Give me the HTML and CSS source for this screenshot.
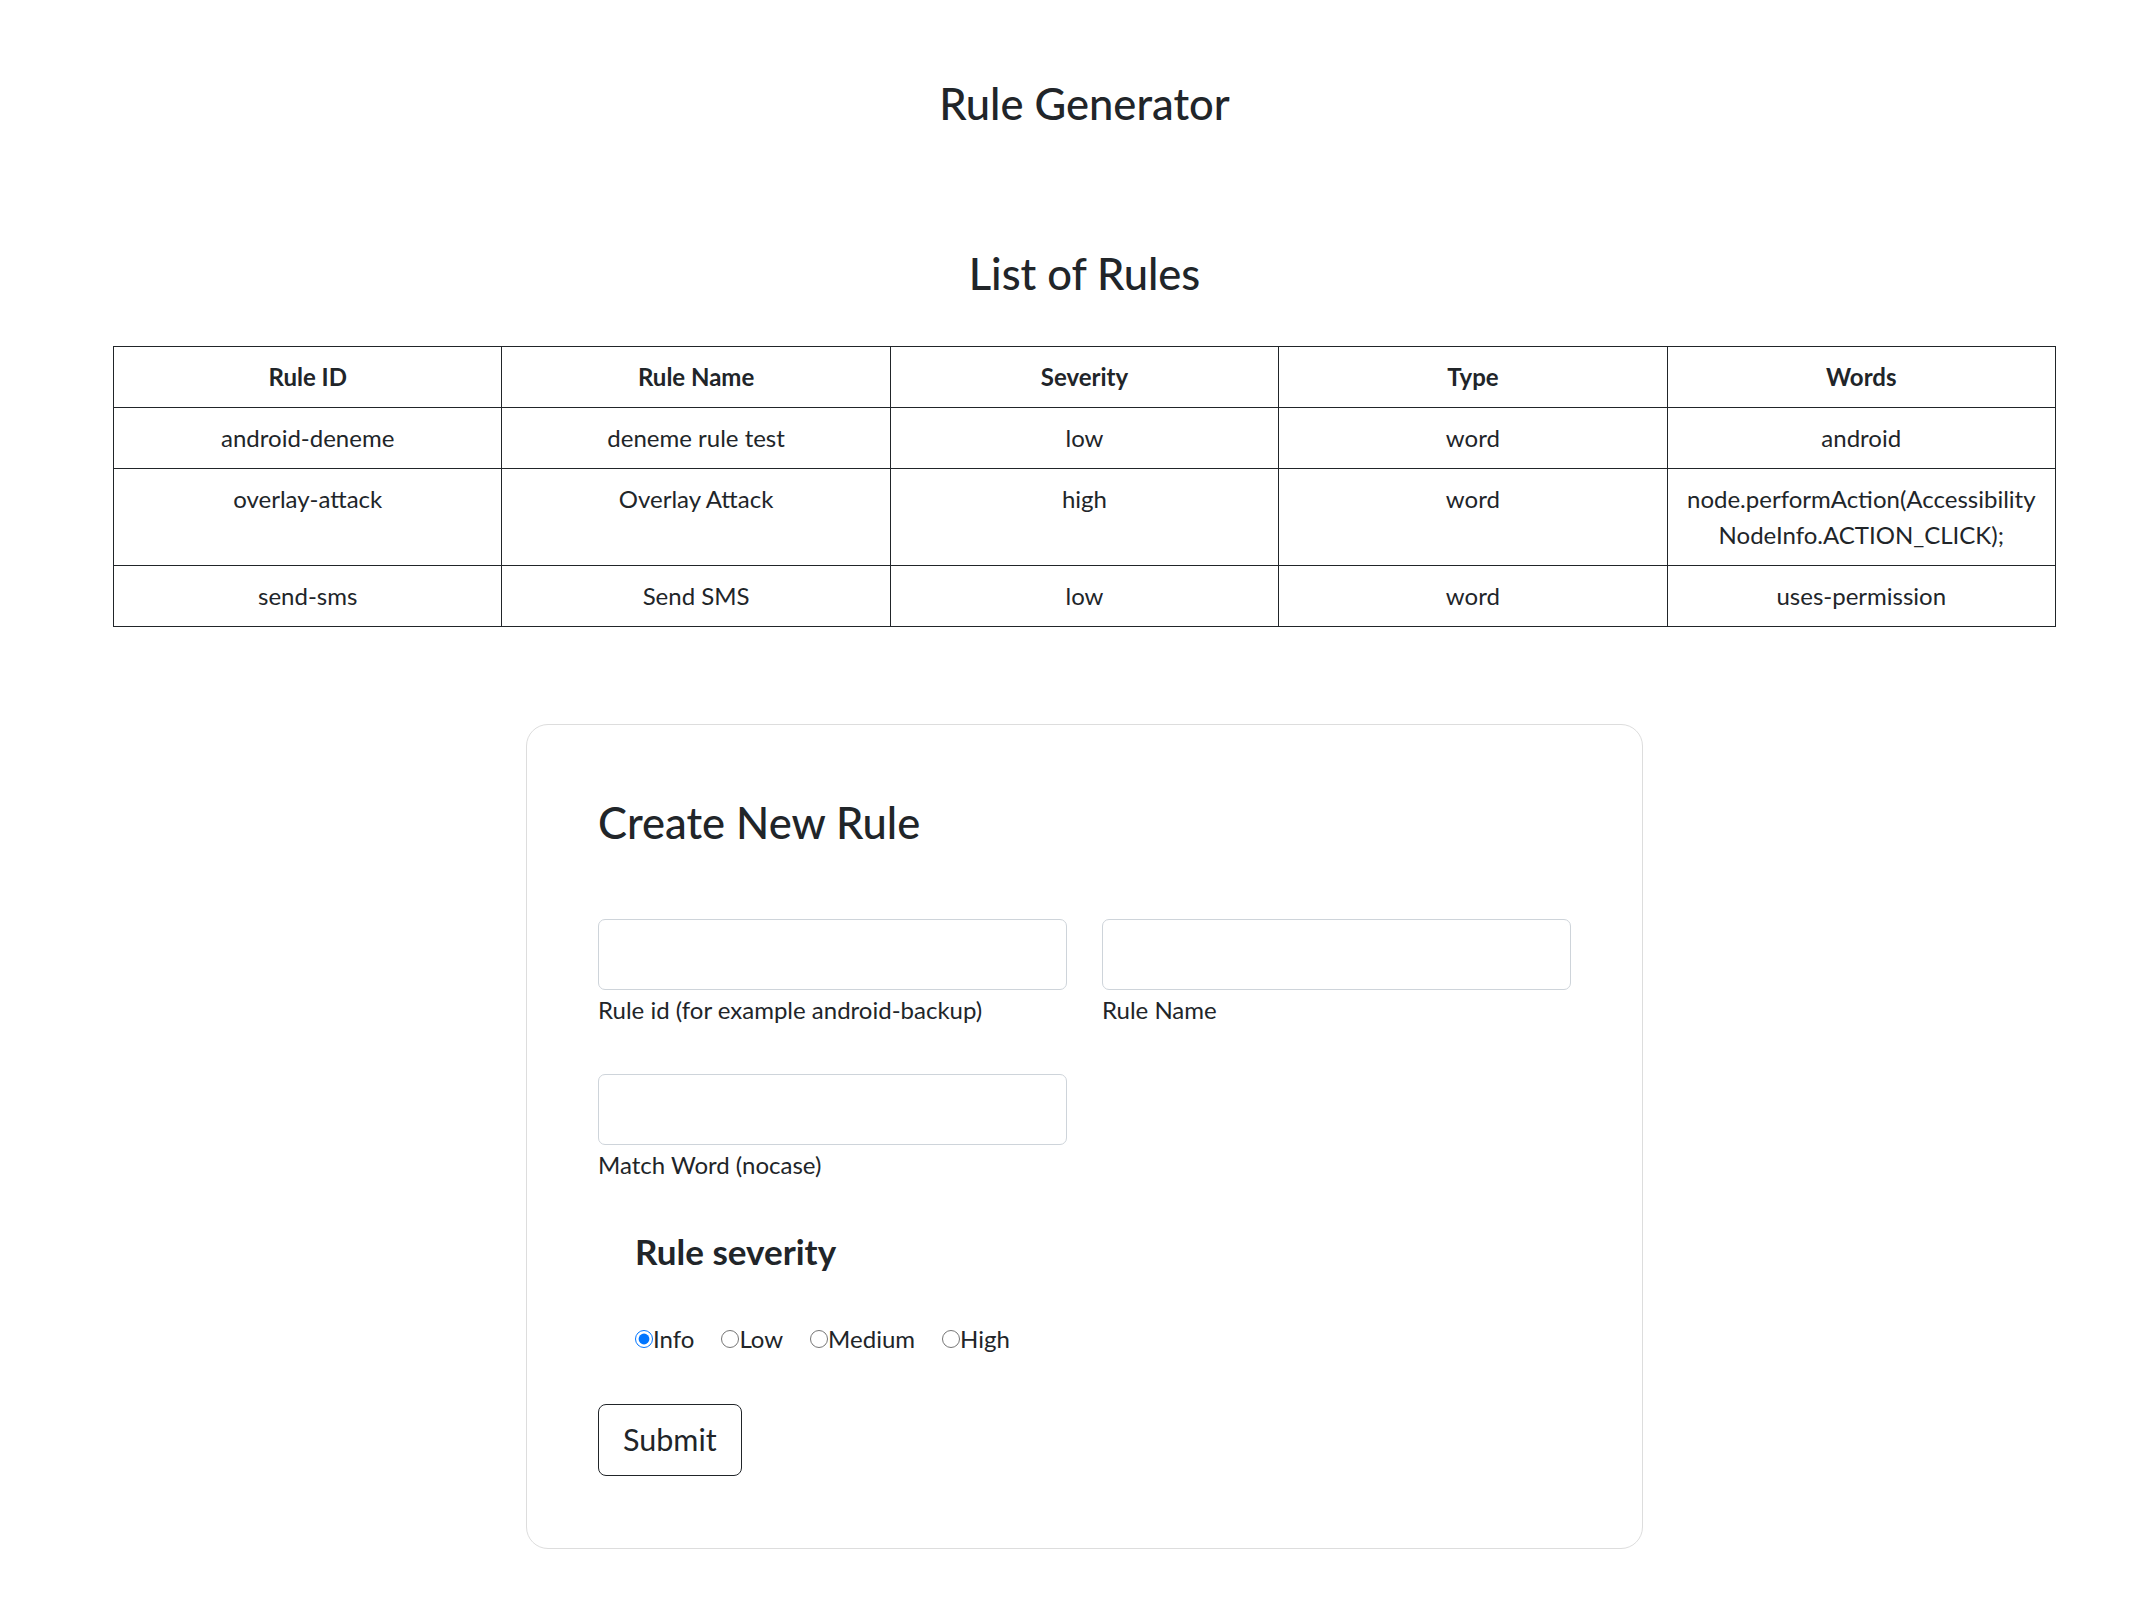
FILE: index.html
```html
<!DOCTYPE html>
<html lang="en">
<head>
<meta charset="utf-8">
<title>Rule Generator</title>
<link rel="stylesheet" href="styles.css">
</head>
<body>
<div class="page">
  <h1 class="page-title">Rule Generator</h1>
  <h2 class="page-title list-title">List of Rules</h2>
  <table class="rules">
    <thead>
      <tr><th>Rule ID</th><th>Rule Name</th><th>Severity</th><th>Type</th><th>Words</th></tr>
    </thead>
    <tbody>
      <tr><td>android-deneme</td><td>deneme rule test</td><td>low</td><td>word</td><td>android</td></tr>
      <tr><td>overlay-attack</td><td>Overlay Attack</td><td>high</td><td>word</td><td>node.performAction(Accessibility<wbr>NodeInfo.ACTION_CLICK);</td></tr>
      <tr><td>send-sms</td><td>Send SMS</td><td>low</td><td>word</td><td>uses-permission</td></tr>
    </tbody>
  </table>

  <form class="card">
    <h2 class="card-title">Create New Rule</h2>
    <div class="fields">
      <div class="field">
        <input class="input" type="text">
        <div class="hint">Rule id (for example android-backup)</div>
      </div>
      <div class="field">
        <input class="input" type="text">
        <div class="hint">Rule Name</div>
      </div>
      <div class="field">
        <input class="input" type="text">
        <div class="hint">Match Word (nocase)</div>
      </div>
    </div>
    <div class="severity">
      <h4 class="severity-title">Rule severity</h4>
      <div class="radios">
        <label class="radio"><input type="radio" name="sev" checked>Info</label>
        <label class="radio"><input type="radio" name="sev">Low</label>
        <label class="radio"><input type="radio" name="sev">Medium</label>
        <label class="radio"><input type="radio" name="sev">High</label>
      </div>
    </div>
    <button type="button" class="submit">Submit</button>
  </form>
</div>
</body>
</html>
```
FILE: styles.css
```css
html, body {
  margin: 0;
  padding: 0;
  background: #ffffff;
}

body {
  font-family: Lato, "Open Sans", "Liberation Sans", sans-serif;
  font-size: 24px;
  line-height: 1.5;
  color: #212529;
}

.page {
  margin-left: 113px;
  width: 1943px;
  padding-bottom: 61px;
}

.page-title {
  margin: 77px 0 0;
  font-size: 43.5px;
  line-height: 1.2;
  font-weight: 500;
  text-align: center;
}

.list-title {
  margin-top: 118px;
}

.rules {
  margin-top: 47px;
  width: 1943px;
  border-collapse: collapse;
  table-layout: fixed;
}

.rules th,
.rules td {
  border: 1px solid #212529;
  padding: 12px 10px;
  line-height: 36px;
  text-align: center;
  vertical-align: top;
  overflow-wrap: anywhere;
}

.rules th {
  font-weight: 700;
}

.card {
  display: block;
  margin: 97px auto 0;
  width: 1117px;
  box-sizing: border-box;
  border: 1px solid #dddddd;
  border-radius: 22px;
  padding: 71px 71px 72px;
}

.card-title {
  margin: 0 0 70px;
  font-size: 43.5px;
  line-height: 1.2;
  font-weight: 500;
}

.fields {
  display: grid;
  grid-template-columns: 469px 469px;
  column-gap: 35px;
  row-gap: 46px;
}

.field {
  display: flex;
  flex-direction: column;
}

.input {
  display: block;
  box-sizing: border-box;
  width: 100%;
  height: 71px;
  margin: 0;
  border: 1px solid #ced4da;
  border-radius: 7px;
  background: #ffffff;
  font: inherit;
}

.hint {
  margin-top: 2px;
  line-height: 36px;
}

.severity {
  padding-left: 37px;
  margin-top: 47px;
}

.severity-title {
  margin: 0;
  font-size: 35px;
  line-height: 1.2;
  font-weight: 700;
}

.radios {
  display: flex;
  gap: 27px;
  margin-top: 49px;
  line-height: 36px;
}

.radio {
  display: inline-flex;
  align-items: center;
}

.radio input {
  width: 18px;
  height: 18px;
  margin: 0;
}

.submit {
  display: block;
  margin-top: 47px;
  height: 72px;
  padding: 0 24px;
  border: 1px solid #212529;
  border-radius: 8px;
  background: #ffffff;
  color: #212529;
  font-family: inherit;
  font-size: 30.5px;
  line-height: 1.5;
}
```
